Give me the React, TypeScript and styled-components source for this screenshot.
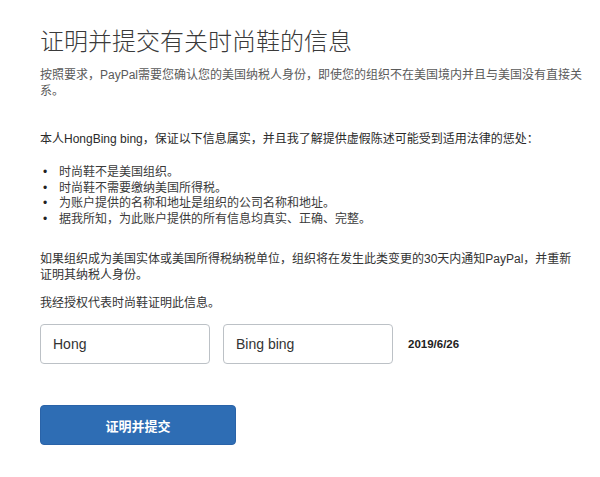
import styled, { createGlobalStyle } from "styled-components";

const GlobalStyle = createGlobalStyle`
  body {
    margin: 0;
    background: #ffffff;
    font-family: "Liberation Sans", "Noto Sans CJK SC", Arial, sans-serif;
  }
`;

const statements = [
  "时尚鞋不是美国组织。",
  "时尚鞋不需要缴纳美国所得税。",
  "为账户提供的名称和地址是组织的公司名称和地址。",
  "据我所知，为此账户提供的所有信息均真实、正确、完整。",
];

const App = () => {
  return (
    <>
      <GlobalStyle />
      <Page>
        <Title>证明并提交有关时尚鞋的信息</Title>
        <Intro>
          按照要求，PayPal需要您确认您的美国纳税人身份，即使您的组织不在美国境内并且与美国没有直接关系。
        </Intro>
        <Declaration>
          本人HongBing bing，保证以下信息属实，并且我了解提供虚假陈述可能受到适用法律的惩处：
        </Declaration>
        <List>
          {statements.map((s) => (
            <Item key={s}>{s}</Item>
          ))}
        </List>
        <Notice>
          如果组织成为美国实体或美国所得税纳税单位，组织将在发生此类变更的30天内通知PayPal，并重新证明其纳税人身份。
        </Notice>
        <Authorized>我经授权代表时尚鞋证明此信息。</Authorized>
        <SignRow>
          <NameInput defaultValue="Hong" />
          <NameInput defaultValue="Bing bing" />
          <DateText>2019/6/26</DateText>
        </SignRow>
        <SubmitButton type="button">证明并提交</SubmitButton>
      </Page>
    </>
  );
};

const Page = styled.div`
  display: flex;
  flex-direction: column;
  align-items: flex-start;
  padding: 26px 0 0 40px;
  width: 543px;
`;

const Title = styled.h1`
  margin: 0;
  font-size: 24px;
  line-height: 32px;
  font-weight: 300;
  color: #3a3a3a;
`;

const Text = styled.p`
  margin: 0;
  font-size: 12px;
  line-height: 16px;
  color: #333;
  width: 543px;
`;

const Intro = styled(Text)`
  margin-top: 9px;
  color: #5a5a5a;
`;

const Declaration = styled(Text)`
  margin-top: 32px;
  color: #2a2a2a;
`;

const List = styled.ul`
  margin: 18px 0 0;
  padding: 0;
  list-style: none;
`;

const Item = styled.li`
  display: flex;
  font-size: 12px;
  line-height: 15.6px;
  height: 15.6px;
  color: #3a3a3a;

  &::before {
    content: "•";
    width: 19px;
    padding-left: 3px;
    box-sizing: border-box;
    color: #222;
  }
`;

const Notice = styled(Text)`
  margin-top: 24px;
`;

const Authorized = styled(Text)`
  margin-top: 12px;
`;

const SignRow = styled.div`
  display: flex;
  align-items: center;
  margin-top: 13px;
`;

const NameInput = styled.input`
  box-sizing: border-box;
  width: 170px;
  height: 40px;
  margin-right: 13px;
  padding: 0 12px;
  border: 1px solid #bcc1c6;
  border-radius: 4px;
  font-family: "Liberation Sans", Arial, sans-serif;
  font-size: 14px;
  color: #333;
  outline: none;
`;

const DateText = styled.span`
  margin-left: 2px;
  font-size: 11.5px;
  font-weight: bold;
  color: #222;
`;

const SubmitButton = styled.button`
  margin-top: 41px;
  width: 196px;
  height: 40px;
  border: 1px solid #2a63a8;
  border-radius: 4px;
  background: #2e6db4;
  color: #ffffff;
  font-family: "Liberation Sans", "Noto Sans CJK SC", Arial, sans-serif;
  font-size: 13px;
  font-weight: bold;
  cursor: pointer;
`;

export default App;
